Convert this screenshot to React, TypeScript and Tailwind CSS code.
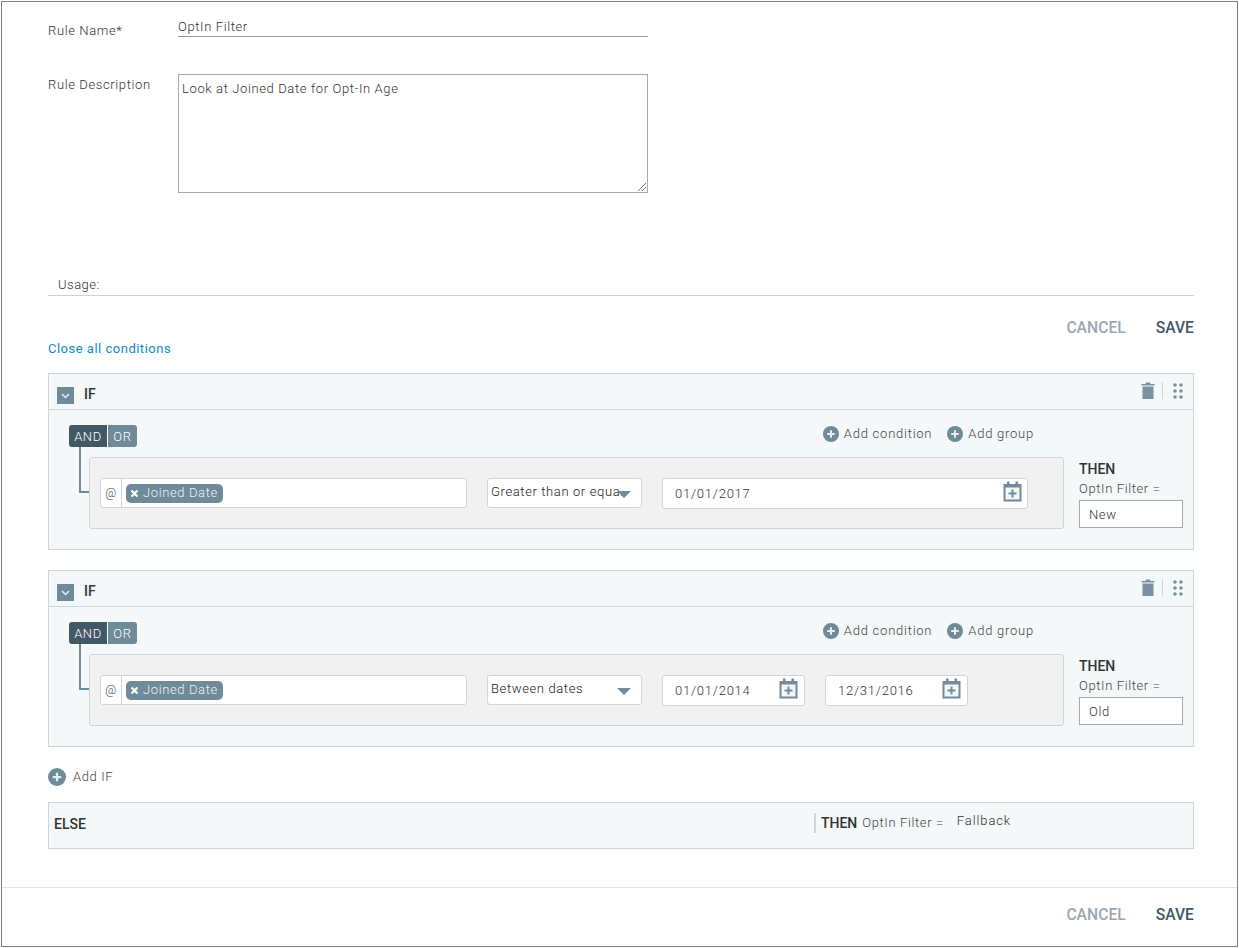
import React from "react";

const Plus = ({ size = 16 }: { size?: number }) => (
  <svg width={size} height={size} viewBox="0 0 16 16" className="shrink-0">
    <circle cx="8" cy="8" r="8" fill="#6f8a99" />
    <path d="M8 4.2v7.6M4.2 8h7.6" stroke="#fff" strokeWidth="2" opacity="0.85" />
  </svg>
);

const Trash = () => (
  <svg width="14" height="17" viewBox="0 0 14 17">
    <path d="M5 0.5h4l0.6 1.5H13.500v1.500H0.500V2H4.400z" fill="#7b919f" />
    <path d="M1.500 4.500h11V17h-11z" fill="#7b919f" />
  </svg>
);

const Grip = () => (
  <svg width="10" height="16" viewBox="0 0 10 16" fill="#7b919f">
    {[2, 8, 14].map((y) => (
      <React.Fragment key={y}>
        <circle cx="2" cy={y} r="1.800" />
        <circle cx="8" cy={y} r="1.800" />
      </React.Fragment>
    ))}
  </svg>
);

const Cal = () => (
  <svg width="19" height="21" viewBox="0 0 19 21" className="shrink-0">
    <path d="M4 0.500h2.500V3h6V0.500H15V3h3.500v17.500H0.500V3H4z" fill="#728a99" />
    <rect x="2.500" y="6.500" width="14" height="12" fill="#f3f6f7" />
    <path d="M9.500 8.500v8M5.500 12.500h8" stroke="#728a99" strokeWidth="2" />
  </svg>
);

const Chevron = () => (
  <div className="w-[17px] h-[17px] mt-[8px] bg-[#6f8a99] flex items-center justify-center">
    <svg width="9" height="6" viewBox="0 0 9 6">
      <path d="M1 1l3.500 3.500L8 1" fill="none" stroke="#e8eef1" strokeWidth="1.500" />
    </svg>
  </div>
);

const Add = ({ label }: { label: string }) => (
  <div className="flex items-center gap-[5px]">
    <Plus />
    <span>{label}</span>
  </div>
);

const Actions = () => (
  <div className="flex justify-end gap-[30px] font-medium text-[15.7px] leading-5 tracking-normal">
    <span className="text-[#9aa7b1]">CANCEL</span>
    <span className="text-[#40596a]">SAVE</span>
  </div>
);

const DateBox = ({ value, wide }: { value: string; wide?: boolean }) => (
  <div
    className={`h-[31px] bg-white border border-[#ccd6dc] rounded-[3px] flex items-center justify-between pl-3 pr-[5px] ${
      wide ? "w-[366px]" : "w-[143px]"
    }`}
  >
    <span className="text-[#333] mt-[1px] tracking-[0.75px]">{value}</span>
    <span className={wide ? "mb-[4px]" : "mb-[3px] mr-[1px]"}>
      <Cal />
    </span>
  </div>
);

const IfBlock = ({
  op,
  dates,
  thenValue,
}: {
  op: string;
  dates: string[];
  thenValue: string;
}) => (
  <div className="h-[177px] border border-[#ccd6dc] bg-[#f4f8f9]">
    <div className="h-[36px] border-b border-[#ccd6dc] flex items-center pl-2 pr-[10px]">
      <Chevron />
      <span className="ml-[10px] mt-[5px] font-medium text-sm text-[#333] tracking-normal">IF</span>
      <div className="ml-auto flex items-center mb-[2px]">
        <Trash />
        <div className="w-px h-[17px] bg-[#ccd6dc] ml-[7px] mr-[10px]" />
        <Grip />
      </div>
    </div>
    <div className="flex pl-[40px] pr-[10px]">
      <div className="w-[975px] relative">
        <div className="flex justify-between items-center h-[22px] mt-[15px] ml-[-20px] pr-[30px]">
          <div className="flex h-[22px] rounded-[3px] overflow-hidden text-white">
            <span className="w-[38px] pt-[2px] bg-[#425865] flex items-center justify-center">AND</span>
            <span className="w-px bg-white" />
            <span className="w-[29px] pt-[2px] bg-[#6f8a99] flex items-center justify-center">OR</span>
          </div>
          <div className="flex gap-[15px] text-[#444] -mt-[4px] tracking-[0.76px]">
            <Add label="Add condition" />
            <Add label="Add group" />
          </div>
        </div>
        <div className="absolute left-[-10px] top-[37px] w-[10px] h-[46px] border-l-2 border-b-2 border-[#6f8a99]" />
        <div className="h-[72px] mt-[10px] bg-[#f1f1f1] border border-[#ccd6dc] rounded-[3px] flex items-center pl-[10px] gap-5">
          <div className="w-[367px] h-[30px] bg-white border border-[#ccd6dc] rounded-[3px] flex items-center">
            <span className="w-[21px] h-full border-r border-[#ccd6dc] flex items-center justify-center text-[#444] text-xs">
              @
            </span>
            <span className="ml-1 h-[19px] w-[97px] rounded-[5px] bg-[#6f8a99] text-[#eef2f4] flex items-center pl-[4px] gap-[4px]">
              <svg width="9" height="9" viewBox="0 0 9 9">
                <path d="M1.500 1.500l6 6M7.500 1.500l-6 6" stroke="#fff" strokeWidth="2.200" />
              </svg>
              Joined Date
            </span>
          </div>
          <div className="w-[155px] h-[30px] bg-white border border-[#ccd6dc] rounded-[3px] flex items-center pl-[3px] relative text-[#222]">
            <span className="whitespace-nowrap -mt-[3px]">{op}</span>
            <svg width="14" height="7" viewBox="0 0 14 7" className="absolute right-[10px] top-[12px]">
              <path d="M0 0h14L7 7z" fill="#6f8a99" />
            </svg>
          </div>
          {dates.map((d) => (
            <DateBox key={d} value={d} wide={dates.length === 1} />
          ))}
        </div>
      </div>
      <div className="ml-[15px] w-[104px] pt-[50px] text-[#444]">
        <div className="font-medium text-sm text-[#333] leading-[18px] tracking-normal">THEN</div>
        <div className="leading-[18px] mt-[2px]">OptIn Filter =</div>
        <div className="h-[28px] bg-white border border-[#a9a9a9] mt-[2px] pl-[9px] pt-[1px] flex items-center text-[#333]">
          {thenValue}
        </div>
      </div>
    </div>
  </div>
);

export default function App() {
  return (
    <div className="w-[1239px] h-[948px] p-px bg-white font-['Roboto',sans-serif] font-light text-[13px] tracking-[0.62px] text-[#333]">
      <div className="h-[946px] border border-[#808080] flex flex-col">
        <div className="pl-[46px] pr-[43px]">
          <div className="flex h-[72px]">
            <div className="w-[130px] pt-[20px] leading-[18px]">Rule Name*</div>
            <div className="w-[470px] h-[35px] pt-[16px] leading-[18px] border-b border-[#999]">OptIn Filter</div>
          </div>
          <div className="flex">
            <div className="w-[130px] pt-[2px] leading-[18px]">Rule Description</div>
            <div className="w-[470px] h-[119px] border border-[#a9a9a9] px-[3px] pt-[5px] leading-[18px] relative">
              Look at Joined Date for Opt-In Age
              <svg width="11" height="11" viewBox="0 0 11 11" className="absolute right-0 bottom-0">
                <path d="M10 2L2 10M10 6L6 10" stroke="#777" strokeWidth="1" />
              </svg>
            </div>
          </div>
          <div className="h-[29px] mt-[74px] pl-[10px] pt-[9px] leading-[18px] tracking-[0.5px] border-b border-[#ccd0d3]">
            Usage:
          </div>
          <div className="mt-[22px]">
            <Actions />
          </div>
          <div className="text-[#0e8cc4] font-normal tracking-[0.5px] leading-[18px] mt-[2px]">Close all conditions</div>
          <div className="mt-[15px]">
            <IfBlock op="Greater than or equa.." dates={["01/01/2017"]} thenValue="New" />
          </div>
          <div className="mt-[20px]">
            <IfBlock op="Between dates" dates={["01/01/2014", "12/31/2016"]} thenValue="Old" />
          </div>
          <div className="mt-[21px] h-[18px] flex items-center">
            <div className="flex items-center gap-[7px] text-[#444]">
              <Plus size={18} />
              <span>Add IF</span>
            </div>
          </div>
          <div className="mt-[16px] h-[47px] border border-[#ccd6dc] bg-[#f4f8f9] flex pl-[5px] pt-[11px]">
            <span className="w-[760px] font-medium text-sm text-[#333] tracking-normal leading-5">ELSE</span>
            <div className="h-[20px] -mt-px border-l-2 border-[#ccd6dc] pl-[5px] flex leading-5">
              <span className="font-medium text-sm text-[#333] tracking-normal">THEN</span>
              <span className="ml-[5px] text-[#444]">OptIn Filter =</span>
              <span className="ml-[13px] -mt-[2px] tracking-[0.9px]">Fallback</span>
            </div>
          </div>
        </div>
        <div className="mt-[38px] border-t border-[#e2e4e6] pt-[17px] pr-[43px]">
          <Actions />
        </div>
      </div>
    </div>
  );
}
